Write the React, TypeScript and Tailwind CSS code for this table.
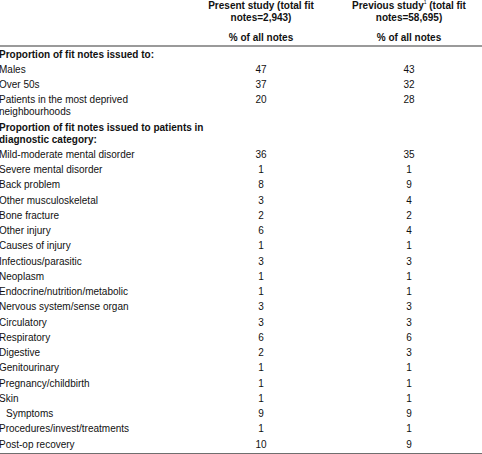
import React from "react";

type Row = { label: string; a?: string; b?: string; bold?: boolean; indent?: boolean; lines?: string[] };

const rows: Row[] = [
  { label: "Proportion of fit notes issued to:", bold: true },
  { label: "Males", a: "47", b: "43" },
  { label: "Over 50s", a: "37", b: "32" },
  { label: "", lines: ["Patients in the most deprived", "neighbourhoods"], a: "20", b: "28" },
  { label: "", lines: ["Proportion of fit notes issued to patients in", "diagnostic category:"], bold: true },
  { label: "Mild-moderate mental disorder", a: "36", b: "35" },
  { label: "Severe mental disorder", a: "1", b: "1" },
  { label: "Back problem", a: "8", b: "9" },
  { label: "Other musculoskeletal", a: "3", b: "4" },
  { label: "Bone fracture", a: "2", b: "2" },
  { label: "Other injury", a: "6", b: "4" },
  { label: "Causes of injury", a: "1", b: "1" },
  { label: "Infectious/parasitic", a: "3", b: "3" },
  { label: "Neoplasm", a: "1", b: "1" },
  { label: "Endocrine/nutrition/metabolic", a: "1", b: "1" },
  { label: "Nervous system/sense organ", a: "3", b: "3" },
  { label: "Circulatory", a: "3", b: "3" },
  { label: "Respiratory", a: "6", b: "6" },
  { label: "Digestive", a: "2", b: "3" },
  { label: "Genitourinary", a: "1", b: "1" },
  { label: "Pregnancy/childbirth", a: "1", b: "1" },
  { label: "Skin", a: "1", b: "1" },
  { label: "Symptoms", a: "9", b: "9", indent: true },
  { label: "Procedures/invest/treatments", a: "1", b: "1" },
  { label: "Post-op recovery", a: "10", b: "9" },
];

export default function App() {
  return (
    <div
      className="w-[482px] h-[454px] overflow-hidden bg-white text-[#111] text-[10px] leading-[12px]"
      style={{ fontFamily: '"Liberation Sans", Arial, sans-serif' }}
    >
      {/* Header */}
      <div className="grid grid-cols-[200px_122px_160px] font-bold">
        <div />
        <div className="text-center whitespace-nowrap">
          <div>Present study (total fit</div>
          <div>notes=2,943)</div>
          <div className="mt-[8px]">% of all notes</div>
        </div>
        <div className="text-center pl-[14px] whitespace-nowrap">
          <div>
            Previous study<sup className="text-[5px] font-normal align-super relative -top-[1px]">1</sup> (total fit
          </div>
          <div>notes=58,695)</div>
          <div className="mt-[8px]">% of all notes</div>
        </div>
      </div>
      <div className="mt-[1px] h-[2px] bg-[#9a9a9a]" />
      {/* Body */}
      <div className="flex flex-col">
        {rows.map((r, i) => (
          <div key={i} className="grid grid-cols-[200px_122px_160px] py-[1.64px]">
            <div
              className={`-ml-[1px] whitespace-nowrap ${r.bold ? "font-bold" : ""} ${r.indent ? "pl-[7px]" : ""}`}
            >
              {r.lines ? r.lines.map((l, j) => <div key={j}>{l}</div>) : r.label}
            </div>
            <div className="text-center">{r.a ?? ""}</div>
            <div className="text-center pl-[14px]">{r.b ?? ""}</div>
          </div>
        ))}
      </div>
      <div className="mt-[0.5px] h-[2px] bg-[#6f6f6f]" />
    </div>
  );
}
